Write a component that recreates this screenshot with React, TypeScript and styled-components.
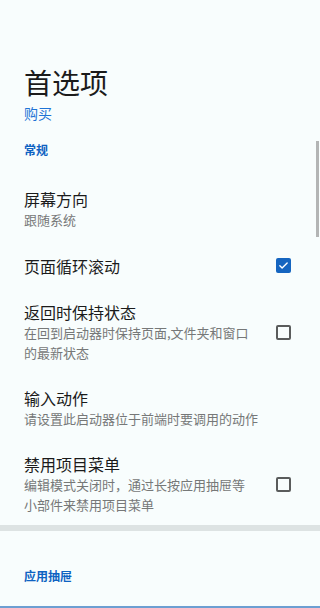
import styled, { createGlobalStyle } from "styled-components";

const GlobalStyle = createGlobalStyle`
  html, body {
    margin: 0;
    padding: 0;
    background: #f8fdfd;
  }
  body {
    font-family: "Noto Sans CJK SC", Roboto, "Noto Sans", sans-serif;
    overflow: hidden;
  }
`;

interface PrefItem {
  title: string;
  summary?: string;
  checkbox?: boolean;
  checked?: boolean;
}

const general: PrefItem[] = [
  { title: "屏幕方向", summary: "跟随系统" },
  { title: "页面循环滚动", checkbox: true, checked: true },
  { title: "返回时保持状态", summary: "在回到启动器时保持页面,文件夹和窗口的最新状态", checkbox: true },
  { title: "输入动作", summary: "请设置此启动器位于前端时要调用的动作" },
  { title: "禁用项目菜单", summary: "编辑模式关闭时，通过长按应用抽屉等小部件来禁用项目菜单", checkbox: true },
];

const Screen = styled.div`
  position: relative;
  width: 320px;
  height: 608px;
  overflow: hidden;
  background: #f8fdfd;
`;

const Header = styled.header`
  display: flex;
  flex-direction: column;
  padding: 64px 24px 0;
`;

const Title = styled.h1`
  margin: 0;
  font-size: 28px;
  line-height: 36px;
  font-weight: 400;
  color: #1b1b1b;
`;

const BuyLink = styled.a`
  margin-top: 3px;
  font-size: 14px;
  line-height: 20px;
  color: #1f74d6;
  text-decoration: none;
`;

const Category = styled.div<{ $top: number }>`
  margin-top: ${(p) => p.$top}px;
  padding: 0 24px;
  font-size: 12px;
  line-height: 16px;
  font-weight: 700;
  color: #0e62c2;
`;

const List = styled.div`
  display: flex;
  flex-direction: column;
  margin-top: 18px;
`;

const Row = styled.div`
  display: flex;
  align-items: center;
  min-height: 47px;
  box-sizing: border-box;
  padding: 12px 8px 12px 24px;
`;

const Texts = styled.div`
  flex: 1;
  display: flex;
  flex-direction: column;
  min-width: 0;
`;

const RowTitle = styled.div`
  font-size: 16px;
  line-height: 22px;
  color: #1b1b1b;
`;

const Summary = styled.div<{ $narrow: boolean }>`
  font-size: 13px;
  line-height: 20px;
  color: #767878;
  max-width: ${(p) => (p.$narrow ? "230px" : "none")};
`;

const Widget = styled.div`
  width: 58px;
  flex-shrink: 0;
  display: flex;
  justify-content: center;
  align-items: center;
`;

const Box = styled.div<{ $checked: boolean }>`
  width: 15px;
  height: 15px;
  box-sizing: border-box;
  border-radius: 2px;
  display: flex;
  align-items: center;
  justify-content: center;
  background: ${(p) => (p.$checked ? "#1565c0" : "transparent")};
  border: ${(p) => (p.$checked ? "none" : "2px solid #5a5c5c")};
`;

const Divider = styled.div`
  height: 6px;
  margin-top: -2px;
  background: #dde3e3;
`;

const BottomEdge = styled.div`
  position: absolute;
  left: 0;
  right: 0;
  bottom: 0;
  height: 2px;
  background: #6d9fd2;
`;

const ScrollThumb = styled.div`
  position: absolute;
  right: 1px;
  top: 141px;
  width: 3px;
  height: 96px;
  background: #b3b5b5;
`;

const Checkbox = ({ checked }: { checked: boolean }) => (
  <Box $checked={checked}>
    {checked && (
      <svg width="11" height="11" viewBox="0 0 24 24">
        <path d="M4 12.5l5 5L20 6.5" fill="none" stroke="#ffffff" strokeWidth="3" strokeLinecap="round" strokeLinejoin="round" />
      </svg>
    )}
  </Box>
);

export default function App() {
  return (
    <Screen>
      <GlobalStyle />
      <Header>
        <Title>首选项</Title>
        <BuyLink>购买</BuyLink>
      </Header>
      <Category $top={19}>常规</Category>
      <List>
        {general.map((item) => (
          <Row key={item.title}>
            <Texts>
              <RowTitle>{item.title}</RowTitle>
              {item.summary && <Summary $narrow={!!item.checkbox}>{item.summary}</Summary>}
            </Texts>
            {item.checkbox && (
              <Widget>
                <Checkbox checked={!!item.checked} />
              </Widget>
            )}
          </Row>
        ))}
      </List>
      <Divider />
      <Category $top={37}>应用抽屉</Category>
      <ScrollThumb />
      <BottomEdge />
    </Screen>
  );
}
